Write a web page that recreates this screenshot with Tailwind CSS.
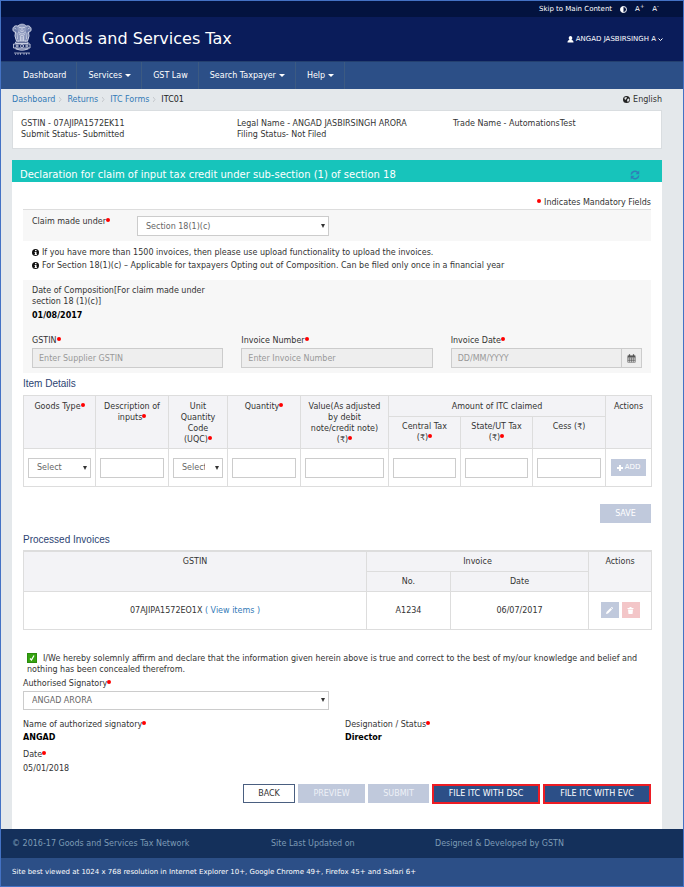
<!DOCTYPE html>
<html lang="en">
<head>
<meta charset="utf-8">
<meta name="viewport" content="width=device-width, initial-scale=1">
<title>Goods and Services Tax</title>
<script src="https://cdn.jsdelivr.net/npm/@tailwindcss/browser@4"></script>
</head>
<body class="bg-[#e4e8eb] font-['DejaVu_Sans',Verdana,sans-serif] text-[8px] leading-[11px] text-[#333]">
<div class="flex min-h-screen flex-col border border-[#4472c4]">

  <!-- Accessibility bar -->
  <div class="flex h-4 items-center justify-end gap-2 bg-[#03133f] pr-6 text-[7px] text-white">
    <a href="#main">Skip to Main Content</a>
    <button type="button" aria-label="Contrast"><svg class="size-[7px]" viewBox="0 0 14 14"><circle cx="7" cy="7" r="6" fill="none" stroke="#fff" stroke-width="2"/><path d="M7 1a6 6 0 0 0 0 12z" fill="#fff"/></svg></button>
    <button type="button">A<sup>+</sup></button>
    <button type="button">A<sup>-</sup></button>
  </div>

  <!-- Header -->
  <header class="flex h-11 items-center bg-[#0a1c5a] pl-[11px] pr-5 text-white">
    <svg class="h-8 w-5" viewBox="0 0 40 64" aria-label="Emblem of India" fill="none" stroke="#d5daea" stroke-linecap="round">
      <path d="M12 6c2-5 14-5 16 0 3 3 2 8 0 12l2 8-2 10H12l-2-10 2-8c-2-4-3-9 0-12z" fill="#8f9bbf" stroke-width="1.5"/>
      <path d="M11 6C5 4 1 9 2 14c0 3 3 4 5 4l-1 8 3 10h4M29 6c6-2 10 3 9 8 0 3-3 4-5 4l1 8-3 10h-4" fill="#6f7eab" stroke-width="2"/>
      <path d="M15 9h3M22 9h3M20 9v5M16 15c2 3 6 3 8 0M14 19c3 4 9 4 12 0M15 23c3 3 7 3 10 0M17 27v8M23 27v8M20 28v7M5 10l3 2M35 10l-3 2M10 20l1 12M30 20l-1 12" stroke-width="1.6"/>
      <path d="M8 38h24v3H8zM4 42h32v8H4zM8 52h24" stroke-width="1.8"/>
      <circle cx="20" cy="46" r="3" stroke-width="1.5"/>
      <path d="M8 46h5M27 46h5M10 44v4M30 44v4M7 50c4 6 22 6 26 0" stroke-width="1.8"/>
      <path d="M5 60h30M7 62v1M12 61v2M17 61v2M24 61v2M29 61v2M34 61v1" stroke-width="1.4"/>
    </svg>
    <h1 class="ml-[10px] text-[16px] leading-5">Goods and Services Tax</h1>
    <button type="button" class="ml-auto flex items-center gap-[2px] text-[7px]">
      <svg class="size-[7px]" viewBox="0 0 14 14" fill="#fff"><path d="M7 0c2.500 0 3.500 2 3.500 4S9.500 7 9 8c3 0 4 2 4 5H1c0-3 1-5 4-5-.5-1-1.500-2-1.500-4S4.500 0 7 0z"/></svg>
      ANGAD JASBIRSINGH A
      <svg class="size-[5px]" viewBox="0 0 10 10" fill="none" stroke="#fff" stroke-width="2"><path d="M1 3l4 4 4-4"/></svg>
    </button>
  </header>

  <!-- Navigation -->
  <nav class="flex h-7 border-t border-[#24406f] bg-[#2c4f87] pl-[11px] text-white">
    <a href="#" class="flex items-center border-r border-[#3c5a82] pl-[11px] pr-[10px]">Dashboard</a>
    <a href="#" class="flex items-center gap-[3px] border-r border-[#3c5a82] pl-[11px] pr-[10px]">Services <span class="border-x-[3px] border-t-[3px] border-x-transparent border-t-white"></span></a>
    <a href="#" class="flex items-center border-r border-[#3c5a82] pl-[11px] pr-[10px]">GST Law</a>
    <a href="#" class="flex items-center gap-[3px] border-r border-[#3c5a82] pl-[11px] pr-[10px]">Search Taxpayer <span class="border-x-[3px] border-t-[3px] border-x-transparent border-t-white"></span></a>
    <a href="#" class="flex items-center gap-[3px] border-r border-[#3c5a82] pl-[11px] pr-[10px]">Help <span class="border-x-[3px] border-t-[3px] border-x-transparent border-t-white"></span></a>
  </nav>

  <main id="main" class="flex grow flex-col pl-[11px] pr-[21px]">
    <div class="flex h-[21px] items-center">
      <ol class="flex items-center gap-1 text-[#337ab7]">
        <li><a href="#">Dashboard</a></li>
        <li aria-hidden="true"><svg class="h-[5px] w-1" viewBox="0 0 4 5" fill="none" stroke="#c3c7cb"><path d="M0 0l2 2.500L0 5"/></svg></li>
        <li><a href="#">Returns</a></li>
        <li aria-hidden="true"><svg class="h-[5px] w-1" viewBox="0 0 4 5" fill="none" stroke="#c3c7cb"><path d="M0 0l2 2.500L0 5"/></svg></li>
        <li><a href="#">ITC Forms</a></li>
        <li aria-hidden="true"><svg class="h-[5px] w-1" viewBox="0 0 4 5" fill="none" stroke="#c3c7cb"><path d="M0 0l2 2.500L0 5"/></svg></li>
        <li class="text-[#222]">ITC01</li>
      </ol>
      <button type="button" class="ml-auto flex items-center gap-[3px]">
        <svg class="size-[7px]" viewBox="0 0 14 14"><circle cx="7" cy="7" r="7" fill="#222"/><path d="M3 3l4-1 1 2-2 2-1 2-2-2zM9 6l3-1 1 3-3 4-2-2z" fill="#e4e8eb"/></svg>
        English
      </button>
    </div>

    <section class="grid h-[39px] grid-cols-3 border border-[#d9dde0] bg-white pt-[7px]">
      <div class="pl-2"><p>GSTIN - 07AJIPA1572EK11</p><p>Submit Status- Submitted</p></div>
      <div class="pl-2"><p>Legal Name - ANGAD JASBIRSINGH ARORA</p><p>Filing Status- Not Filed</p></div>
      <div class="pl-2"><p>Trade Name - AutomationsTest</p></div>
    </section>

    <div class="mt-[11px] flex h-[22px] items-end bg-[#17c4bb] pl-2 pr-[22px] text-white">
      <h2 class="text-[10px] leading-[14px]">Declaration for claim of input tax credit under sub-section (1) of section 18</h2>
      <button type="button" aria-label="Refresh" class="mb-[2px] ml-auto"><svg class="size-[10px]" viewBox="0 0 20 20" fill="none" stroke="#2f7fb8" stroke-width="3"><path d="M2.500 9A7.500 7.500 0 0 1 15 4.500L17 7M17.500 11A7.500 7.500 0 0 1 5 15.500L3 13"/><path d="M18.500 1v7.500H11zM1.500 19v-7.500H9z" fill="#2f7fb8" stroke="none"/></svg></button>
    </div>

    <form class="grow bg-white px-[11px] pb-[25px] pt-[15px]" onsubmit="return false">
      <p class="flex h-3 items-start justify-end"><span class="mr-[3px] mt-[2px] size-1 rounded-full bg-[#f00]"></span>Indicates Mandatory Fields</p>

      <div class="flex h-8 items-start border-t border-[#ddd] bg-[#f7f7f7] pl-[9px] pt-[6px]">
        <label for="claim" class="w-[105px]">Claim made under<span class="inline-block size-1 rounded-full bg-[#f00] align-[2px]"></span></label>
        <div class="relative w-48">
          <select id="claim" class="block h-5 w-full appearance-none border border-[#ccc] bg-white px-2 text-[#666]"><option>Section 18(1)(c)</option></select>
          <span class="pointer-events-none absolute right-1 top-2 border-x-2 border-t-4 border-x-transparent border-t-[#333]"></span>
        </div>
      </div>

      <ul class="pl-[9px] pt-[5px] leading-[13px]">
        <li class="flex items-center gap-[3px]"><svg class="size-[7px]" viewBox="0 0 14 14"><circle cx="7" cy="7" r="7" fill="#111"/><path d="M6 2h3v2.500H6zM5 6h4v4.500h1V12H5v-1.500h1v-3H5z" fill="#fff"/></svg>If you have more than 1500 invoices, then please use upload functionality to upload the invoices.</li>
        <li class="flex items-center gap-[3px]"><svg class="size-[7px]" viewBox="0 0 14 14"><circle cx="7" cy="7" r="7" fill="#111"/><path d="M6 2h3v2.500H6zM5 6h4v4.500h1V12H5v-1.500h1v-3H5z" fill="#fff"/></svg>For Section 18(1)(c) – Applicable for taxpayers Opting out of Composition. Can be filed only once in a financial year</li>
      </ul>

      <div class="mt-2 bg-[#f7f7f7] pb-[5px] pt-[5px]">
        <div class="w-1/3 pl-[9px] pr-2">
          <p>Date of Composition[For claim made under section 18 (1)(c)]</p>
          <p class="mt-[3px] font-bold text-black">01/08/2017</p>
        </div>
        <div class="mt-[14px] grid grid-cols-3">
          <div class="px-[9px]">
            <label for="gstin" class="mb-[2px] block">GSTIN<span class="inline-block size-1 rounded-full bg-[#f00] align-[2px]"></span></label>
            <input id="gstin" disabled placeholder="Enter Supplier GSTIN" class="block h-5 w-full border border-[#ccc] bg-[#eee] px-[6px] placeholder:text-[#999]">
          </div>
          <div class="px-[9px]">
            <label for="invno" class="mb-[2px] block">Invoice Number<span class="inline-block size-1 rounded-full bg-[#f00] align-[2px]"></span></label>
            <input id="invno" disabled placeholder="Enter Invoice Number" class="block h-5 w-full border border-[#ccc] bg-[#eee] px-[6px] placeholder:text-[#999]">
          </div>
          <div class="px-[9px]">
            <label for="invdate" class="mb-[2px] block">Invoice Date<span class="inline-block size-1 rounded-full bg-[#f00] align-[2px]"></span></label>
            <div class="flex">
              <input id="invdate" disabled placeholder="DD/MM/YYYY" class="h-5 w-full min-w-0 border border-[#ccc] bg-[#eee] px-[6px] placeholder:text-[#999]">
              <button type="button" aria-label="Open calendar" class="flex h-5 w-5 shrink-0 items-center justify-center border border-l-0 border-[#ccc] bg-[#eee]"><svg class="size-[9px]" viewBox="0 0 18 18" fill="none" stroke="#555" stroke-width="1.2"><path d="M1.500 3.500h15v13h-15zM1.500 7h15M1.500 10h15M1.500 13h15M5.300 7v9.500M9 7v9.500M12.700 7v9.500"/><path d="M2 4.500h14M5 .5v4M13 .5v4" stroke-width="2.500"/></svg></button>
            </div>
          </div>
        </div>
      </div>

      <h3 class="mt-[5px] font-['Liberation_Sans',Arial,sans-serif] text-[10px] leading-3 text-[#2c4372]">Item Details</h3>
      <table class="mt-[5px] w-full table-fixed border-collapse text-center">
        <colgroup><col class="w-[72px]"><col class="w-[73px]"><col class="w-[59px]"><col class="w-[73px]"><col class="w-[88px]"><col class="w-[72px]"><col class="w-[72px]"><col class="w-[73px]"><col class="w-[46px]"></colgroup>
        <thead class="bg-[#f3f3f6] align-top">
          <tr class="h-[21px]">
            <th rowspan="2" class="border border-[#ddd] pt-[5px] font-normal">Goods Type<span class="inline-block size-1 rounded-full bg-[#f00] align-[2px]"></span></th>
            <th rowspan="2" class="border border-[#ddd] px-1 pt-[5px] font-normal">Description of inputs<span class="inline-block size-1 rounded-full bg-[#f00] align-[2px]"></span></th>
            <th rowspan="2" class="border border-[#ddd] px-1 pt-[5px] font-normal">Unit<br>Quantity<br>Code<br>(UQC)<span class="inline-block size-1 rounded-full bg-[#f00] align-[2px]"></span></th>
            <th rowspan="2" class="border border-[#ddd] pt-[5px] font-normal">Quantity<span class="inline-block size-1 rounded-full bg-[#f00] align-[2px]"></span></th>
            <th rowspan="2" class="border border-[#ddd] px-1 pt-[5px] font-normal">Value(As adjusted<br>by debit<br>note/credit note)<br>(₹)<span class="inline-block size-1 rounded-full bg-[#f00] align-[2px]"></span></th>
            <th colspan="3" class="border border-[#ddd] pt-[5px] font-normal">Amount of ITC claimed</th>
            <th rowspan="2" class="border border-[#ddd] pt-[5px] font-normal">Actions</th>
          </tr>
          <tr class="h-8">
            <th class="border border-[#ddd] px-1 pt-1 font-normal">Central Tax<br>(₹)<span class="inline-block size-1 rounded-full bg-[#f00] align-[2px]"></span></th>
            <th class="border border-[#ddd] px-1 pt-1 font-normal">State/UT Tax<br>(₹)<span class="inline-block size-1 rounded-full bg-[#f00] align-[2px]"></span></th>
            <th class="border border-[#ddd] px-1 pt-1 font-normal">Cess (₹)</th>
          </tr>
        </thead>
        <tbody>
          <tr class="h-[38px]">
            <td class="border border-[#ddd] px-1"><div class="relative"><select aria-label="Goods Type" class="block h-5 w-full appearance-none border border-[#ccc] bg-white px-2 text-[#666]"><option>Select</option></select><span class="pointer-events-none absolute right-1 top-2 border-x-2 border-t-4 border-x-transparent border-t-[#333]"></span></div></td>
            <td class="border border-[#ddd] px-1"><input aria-label="Description of inputs" class="block h-5 w-full border border-[#ccc] px-1"></td>
            <td class="border border-[#ddd] px-1"><div class="relative"><select aria-label="Unit Quantity Code" class="block h-5 w-full appearance-none border border-[#ccc] bg-white pl-2 pr-[17px] text-[#666]"><option>Select</option></select><span class="pointer-events-none absolute right-1 top-2 border-x-2 border-t-4 border-x-transparent border-t-[#333]"></span></div></td>
            <td class="border border-[#ddd] px-1"><input aria-label="Quantity" class="block h-5 w-full border border-[#ccc] px-1"></td>
            <td class="border border-[#ddd] px-1"><input aria-label="Value" class="block h-5 w-full border border-[#ccc] px-1"></td>
            <td class="border border-[#ddd] px-1"><input aria-label="Central Tax" class="block h-5 w-full border border-[#ccc] px-1"></td>
            <td class="border border-[#ddd] px-1"><input aria-label="State/UT Tax" class="block h-5 w-full border border-[#ccc] px-1"></td>
            <td class="border border-[#ddd] px-1"><input aria-label="Cess" class="block h-5 w-full border border-[#ccc] px-1"></td>
            <td class="border border-[#ddd] px-1"><button type="button" disabled class="mx-auto flex h-[17px] w-[35px] items-center justify-center gap-[2px] bg-[#c0c9dc] text-[7px] text-white"><svg class="size-[6px]" viewBox="0 0 6 6" stroke="#fff" stroke-width="2"><path d="M3 0v6M0 3h6"/></svg>ADD</button></td>
          </tr>
        </tbody>
      </table>

      <div class="mt-[17px] flex justify-end"><button type="button" disabled class="h-[19px] w-[51px] bg-[#c0c9dc] text-white">SAVE</button></div>

      <h3 class="mt-[11px] font-['Liberation_Sans',Arial,sans-serif] text-[10px] leading-3 text-[#2c4372]">Processed Invoices</h3>
      <table class="mt-1 w-full table-fixed border-collapse text-center">
        <colgroup><col class="w-[343px]"><col class="w-[84px]"><col class="w-[138px]"><col class="w-[63px]"></colgroup>
        <thead class="bg-[#f3f3f6]">
          <tr class="h-5">
            <th rowspan="2" class="border border-t-2 border-[#ddd] pt-1 align-top font-normal">GSTIN</th>
            <th colspan="2" class="border border-t-2 border-[#ddd] font-normal">Invoice</th>
            <th rowspan="2" class="border border-t-2 border-[#ddd] pt-1 align-top font-normal">Actions</th>
          </tr>
          <tr class="h-5">
            <th class="border border-[#ddd] font-normal">No.</th>
            <th class="border border-[#ddd] font-normal">Date</th>
          </tr>
        </thead>
        <tbody>
          <tr class="h-[38px]">
            <td class="border border-[#ddd]">07AJIPA1572EO1X <a href="#" class="text-[#337ab7]">( View items )</a></td>
            <td class="border border-[#ddd]">A1234</td>
            <td class="border border-[#ddd]">06/07/2017</td>
            <td class="border border-[#ddd]">
              <div class="flex justify-center gap-[3px]">
                <button type="button" disabled aria-label="Edit" class="flex h-4 w-[18px] items-center justify-center bg-[#c0c9dc]"><svg class="size-[7px]" viewBox="0 0 14 14" fill="#fff"><path d="M0 14l1-4 8-8 3 3-8 8zM10 1l1-1h1l2 2v1l-1 1z"/></svg></button>
                <button type="button" disabled aria-label="Delete" class="flex h-4 w-[18px] items-center justify-center bg-[#f3c6c8]"><svg class="size-[7px]" viewBox="0 0 14 14" fill="#fff"><path d="M1 2h4V0h4v2h4v2H1zM2 5h10l-1 9H3z"/></svg></button>
              </div>
            </td>
          </tr>
        </tbody>
      </table>

      <label class="mt-[23px] block pl-1"><input type="checkbox" checked class="peer sr-only"><span class="-my-1 mr-[6px] inline-flex size-[10px] items-center justify-center border border-[#2b8a0e] bg-[#35a310] align-middle"><svg class="size-[6px]" viewBox="0 0 12 12" fill="none" stroke="#fff" stroke-width="2.500"><path d="M2 7l3 3 5-9"/></svg></span>I/We hereby solemnly affirm and declare that the information given herein above is true and correct to the best of my/our knowledge and belief and nothing has been concealed therefrom.</label>

      <label for="signatory" class="mt-[3px] block">Authorised Signatory<span class="inline-block size-1 rounded-full bg-[#f00] align-[2px]"></span></label>
      <div class="relative mt-[2px] w-[306px]">
        <select id="signatory" class="block h-[19px] w-full appearance-none border border-[#ccc] bg-white px-2 text-[#666]"><option>ANGAD ARORA</option></select>
        <span class="pointer-events-none absolute right-1 top-[7px] border-x-2 border-t-4 border-x-transparent border-t-[#333]"></span>
      </div>

      <dl class="mt-[9px] grid grid-cols-[322px_1fr] gap-y-[6px]">
        <div><dt>Name of authorized signatory<span class="inline-block size-1 rounded-full bg-[#f00] align-[2px]"></span></dt><dd class="mt-[2px] font-bold text-black">ANGAD</dd></div>
        <div><dt>Designation / Status<span class="inline-block size-1 rounded-full bg-[#f00] align-[2px]"></span></dt><dd class="mt-[2px] font-bold text-black">Director</dd></div>
        <div><dt>Date<span class="inline-block size-1 rounded-full bg-[#f00] align-[2px]"></span></dt><dd class="mt-[3px]">05/01/2018</dd></div>
      </dl>

      <div class="mt-[10px] flex items-center justify-end gap-[3px]">
        <button type="button" class="h-[19px] w-[52px] border border-[#4a5f80] bg-white">BACK</button>
        <button type="button" disabled class="h-[19px] w-[67px] bg-[#c0c9dc] text-[#eef1f7]">PREVIEW</button>
        <button type="button" disabled class="h-[19px] w-[61px] bg-[#c0c9dc] text-[#eef1f7]">SUBMIT</button>
        <button type="button" class="h-5 w-[108px] border-2 border-[#ed1c24] bg-[#2c4f87] text-white">FILE ITC WITH DSC</button>
        <button type="button" class="h-5 w-[108px] border-2 border-[#ed1c24] bg-[#2c4f87] text-white">FILE ITC WITH EVC</button>
      </div>
    </form>
  </main>

  <footer>
    <div class="grid h-[29px] grid-cols-[259px_164px_1fr] items-center bg-[#14305b] pl-[11px] text-[#7d9bb5]">
      <p>© 2016-17 Goods and Services Tax Network</p><p>Site Last Updated on</p><p>Designed &amp; Developed by GSTN</p>
    </div>
    <p class="flex h-7 items-center bg-[#2c4f87] pl-[11px] text-[7px] text-white">Site best viewed at 1024 x 768 resolution in Internet Explorer 10+, Google Chrome 49+, Firefox 45+ and Safari 6+</p>
  </footer>
</div>
</body>
</html>
